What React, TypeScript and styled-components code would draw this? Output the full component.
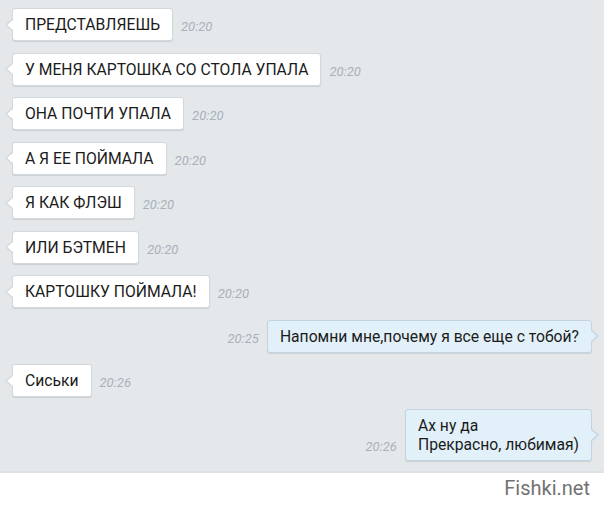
import styled, { createGlobalStyle, css } from 'styled-components';

const GlobalStyle = createGlobalStyle`
  html, body {
    margin: 0;
    padding: 0;
    background: #ffffff;
  }
  body {
    font-family: Roboto, "Noto Sans", "Liberation Sans", sans-serif;
  }
`;

const Page = styled.div`
  width: 604px;
  height: 505px;
  display: flex;
  flex-direction: column;
  overflow: hidden;
`;

const Chat = styled.div`
  height: 473px;
  box-sizing: border-box;
  background-color: #e4e8eb;
  border-bottom: 2px solid #dde2e5;
  padding: 8px 12px 0 12px;
  display: flex;
  flex-direction: column;
  gap: 11.5px;
`;

const Row = styled.div<{ $out?: boolean }>`
  display: flex;
  align-items: flex-end;
  gap: 8px;
  justify-content: ${(p) => (p.$out ? 'flex-end' : 'flex-start')};
`;

const Bubble = styled.div<{ $out?: boolean }>`
  position: relative;
  padding: 6px 12px;
  font-size: 15.7px;
  line-height: 19px;
  color: #1b1b1b;
  border-radius: 3px;
  background-color: #ffffff;
  border: 1px solid #d3d8dc;
  box-shadow: 0 1px 1px rgba(0, 0, 0, 0.1);

  &::before,
  &::after {
    content: '';
    position: absolute;
    top: 50%;
    width: 0;
    height: 0;
    border-style: solid;
  }

  ${(p) =>
    p.$out
      ? css`
          background-color: #e2f0f9;
          border-color: #c3d3df;
          &::before {
            right: -8px;
            margin-top: -7px;
            border-width: 7px 0 7px 8px;
            border-color: transparent transparent transparent #c3d3df;
          }
          &::after {
            right: -6px;
            margin-top: -6px;
            border-width: 6px 0 6px 7px;
            border-color: transparent transparent transparent #e2f0f9;
          }
        `
      : css`
          &::before {
            left: -8px;
            margin-top: -7px;
            border-width: 7px 8px 7px 0;
            border-color: transparent #d3d8dc transparent transparent;
          }
          &::after {
            left: -6px;
            margin-top: -6px;
            border-width: 6px 7px 6px 0;
            border-color: transparent #ffffff transparent transparent;
          }
        `}
`;

const Time = styled.span`
  font-size: 13px;
  font-style: italic;
  color: #a9b2ba;
  margin-bottom: 7px;
`;

const Footer = styled.div`
  flex: 1;
  display: flex;
  justify-content: flex-end;
  align-items: center;
  padding: 0 14px 2px 0;
  font-size: 20px;
  color: #727272;
`;

type Msg = { text: string[]; time: string; out?: boolean };

const messages: Msg[] = [
  { text: ['ПРЕДСТАВЛЯЕШЬ'], time: '20:20' },
  { text: ['У МЕНЯ КАРТОШКА СО СТОЛА УПАЛА'], time: '20:20' },
  { text: ['ОНА ПОЧТИ УПАЛА'], time: '20:20' },
  { text: ['А Я ЕЕ ПОЙМАЛА'], time: '20:20' },
  { text: ['Я КАК ФЛЭШ'], time: '20:20' },
  { text: ['ИЛИ БЭТМЕН'], time: '20:20' },
  { text: ['КАРТОШКУ ПОЙМАЛА!'], time: '20:20' },
  { text: ['Напомни мне,почему я все еще с тобой?'], time: '20:25', out: true },
  { text: ['Сиськи'], time: '20:26' },
  { text: ['Ах ну да', 'Прекрасно, любимая)'], time: '20:26', out: true },
];

export default function App() {
  return (
    <>
      <GlobalStyle />
      <Page>
        <Chat>
          {messages.map((m, i) => (
            <Row key={i} $out={m.out}>
              {m.out && <Time>{m.time}</Time>}
              <Bubble $out={m.out}>
                {m.text.map((line, j) => (
                  <div key={j}>{line}</div>
                ))}
              </Bubble>
              {!m.out && <Time>{m.time}</Time>}
            </Row>
          ))}
        </Chat>
        <Footer>Fishki.net</Footer>
      </Page>
    </>
  );
}
